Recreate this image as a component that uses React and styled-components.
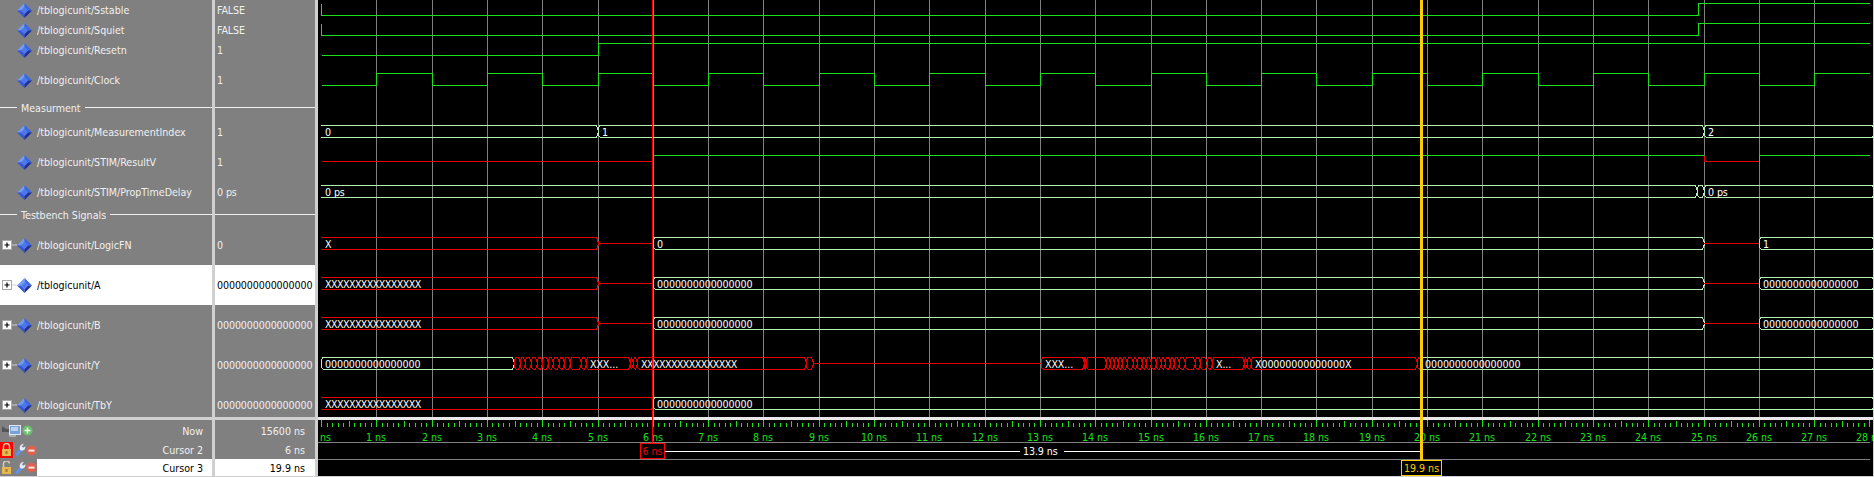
import React from 'react';
import styled, { createGlobalStyle } from 'styled-components';

const FONT = `'DejaVu Sans', 'Liberation Sans', sans-serif`;
const SIZE = '10.6px';

const Global = createGlobalStyle`
    html, body {
        margin: 0;
        padding: 0;
        background: #d0d0d0;
        overflow: hidden;
    }
`;

const Page = styled.div`
    width: 1874px;
    height: 477px;
    display: grid;
    grid-template-columns: 212px 100px 1555px;
    grid-template-rows: 417px 56px;
    column-gap: 3px;
    row-gap: 3px;
    background: #d0d0d0;
    font-family: ${FONT};
    font-stretch: condensed;
    font-size: ${SIZE};
`;

const Column = styled.div`
    grid-column: ${p => p.$col};
    grid-row: ${p => p.$row};
    background: #808080;
    color: #f0f0f0;
    overflow: hidden;
    display: flex;
    flex-direction: column;
`;

const Row = styled.div`
    box-sizing: border-box;
    height: ${p => p.$h}px;
    flex: none;
    display: flex;
    align-items: center;
    white-space: nowrap;
    background: ${p => (p.$selected ? '#fff' : 'transparent')};
    color: ${p => (p.$selected ? '#000' : 'inherit')};
`;

const NameRow = styled(Row)`
    padding-left: 2px;
`;

const ValueRow = styled(Row)`
    padding-left: 2px;
    letter-spacing: -0.1px;
`;

const Expander = styled.span`
    width: 15px;
    height: 11px;
    flex: none;
    display: flex;
    align-items: center;
`;

const NameText = styled.span`
    margin-left: 5px;
`;

const SectionRow = styled(Row)`
    gap: 4px;
    padding-bottom: ${p => p.$after}px;
    &::before {
        content: '';
        width: 17px;
        height: 1px;
        background: #f0f0f0;
    }
    &::after {
        content: '';
        flex: 1;
        height: 1px;
        background: #f0f0f0;
    }
`;

const SectionValue = styled(Row)`
    padding-bottom: ${p => p.$after}px;
    &::after {
        content: '';
        flex: 1;
        height: 1px;
        background: #f0f0f0;
    }
`;

const WavePanel = styled.div`
    grid-column: 3;
    grid-row: 1 / 3;
    background: #000;
    overflow: hidden;
`;

const FootRow = styled.div`
    height: ${p => p.$h}px;
    flex: none;
    display: flex;
    align-items: center;
`;

const FootIcons = styled.div`
    width: 37px;
    height: 100%;
    flex: none;
    display: flex;
    align-items: center;
`;

const FootLabel = styled.div`
    flex: 1;
    height: 100%;
    display: flex;
    align-items: center;
    justify-content: flex-end;
    padding-right: 9px;
    background: ${p => (p.$selected ? '#fff' : 'transparent')};
    color: ${p => (p.$selected ? '#000' : 'inherit')};
`;

const FootValue = styled(FootRow)`
    justify-content: flex-end;
    padding-right: 10px;
    background: ${p => (p.$selected ? '#fff' : 'transparent')};
    color: ${p => (p.$selected ? '#000' : 'inherit')};
`;

const LockBox = styled.span`
    width: 13px;
    height: 16px;
    margin-right: 2px;
    flex: none;
    display: flex;
    align-items: center;
    justify-content: center;
    background: ${p => (p.$active ? '#ff0000' : 'transparent')};
`;

const Diamond = () => (
    <svg width="15" height="15" viewBox="0 0 15 15" style={{ flex: 'none' }}>
        <polygon points="7.5,0 0,7.5 4,7.5 7.5,4" fill="#6f9df7" />
        <polygon points="7.5,0 15,7.5 11,7.5 7.5,4" fill="#3b66e6" />
        <polygon points="0,7.5 7.5,15 7.5,11 4,7.5" fill="#3557d8" />
        <polygon points="15,7.5 7.5,15 7.5,11 11,7.5" fill="#1c2f9e" />
        <polygon points="7.5,4 11,7.5 7.5,11 4,7.5" fill="#4a78f0" />
    </svg>
);

const Plus = () => (
    <svg width="15" height="11" viewBox="0 0 15 11">
        <rect x="0.5" y="0.5" width="9" height="9" fill="#fff" stroke="#a8a8a8" />
        <path d="M2.5 5h5M5 2.5v5" stroke="#000" strokeWidth="1.2" />
        <path d="M10 5h5" stroke="#d0d0d0" />
    </svg>
);

const Lock = ({ open }) => (
    <svg width="11" height="14" viewBox="0 0 11 14">
        <path
            d={open ? 'M2.5 6V3.5a3 3 0 0 1 6 -1' : 'M2.5 6V3.5a3 3 0 0 1 6 0V6'}
            fill="none"
            stroke="#d8d0b0"
            strokeWidth="1.4"
        />
        <rect x="1" y="6" width="9" height="7" fill="#e8b850" />
        <rect x="4.5" y="8" width="2" height="3" fill="#a87820" />
    </svg>
);

const Wrench = () => (
    <svg width="11" height="14" viewBox="0 0 11 14" style={{ flex: 'none' }}>
        <polygon points="0.5,11.5 2.5,13.5 7,7.5 5,5.5" fill="#5b93f5" />
        <path d="M5 6.5C4 3.5 6 1 9 .8L7 3.2 8 4.8 10.5 3.2C10.7 6 8.4 8.2 6 7.5Z" fill="#e8ecf8" />
    </svg>
);

const MinusCircle = () => (
    <svg width="11" height="11" viewBox="0 0 11 11" style={{ flex: 'none' }}>
        <circle cx="5.5" cy="5.5" r="5" fill="#e06050" />
        <rect x="2.5" y="4.6" width="6" height="2" fill="#f8e8e0" />
    </svg>
);

const PlusCircle = () => (
    <svg width="11" height="11" viewBox="0 0 11 11" style={{ flex: 'none' }}>
        <circle cx="5.5" cy="5.5" r="5" fill="#68c068" />
        <path d="M2.5 5.5h6M5.5 2.5v6" stroke="#f0f8f0" strokeWidth="1.6" />
    </svg>
);

const Monitor = () => (
    <svg width="22" height="13" viewBox="0 0 22 13" style={{ flex: 'none' }}>
        <path d="M2 2l4 3h4v3H2z" fill="#555" />
        <rect x="9.5" y="1.5" width="11" height="9" fill="#7aa0d8" stroke="#dfe8f5" />
        <path d="M11 4h7M11 6h7" stroke="#fff" />
        <path d="M9 12h7" stroke="#d8d8d8" />
    </svg>
);

const SIGNALS = [
    { h: 20, name: '/tblogicunit/Sstable', value: 'FALSE' },
    { h: 20, name: '/tblogicunit/Squiet', value: 'FALSE' },
    { h: 20, name: '/tblogicunit/Resetn', value: '1' },
    { h: 40, name: '/tblogicunit/Clock', value: '1' },
    { h: 17, after: 2, section: 'Measurment' },
    { h: 30, name: '/tblogicunit/MeasurementIndex', value: '1' },
    { h: 30, name: '/tblogicunit/STIM/ResultV', value: '1' },
    { h: 30, name: '/tblogicunit/STIM/PropTimeDelay', value: '0 ps' },
    { h: 18, after: 3, section: 'Testbench Signals' },
    { h: 40, name: '/tblogicunit/LogicFN', value: '0', group: true },
    { h: 40, name: '/tblogicunit/A', value: '0000000000000000', group: true, selected: true },
    { h: 40, name: '/tblogicunit/B', value: '0000000000000000', group: true },
    { h: 40, name: '/tblogicunit/Y', value: '0000000000000000', group: true },
    { h: 40, name: '/tblogicunit/TbY', value: '0000000000000000', group: true },
];

const GREEN = '#19e019';
const BUS = '#b4f0b4';
const RED = '#e60000';
const GRID = '#808080';
const RIGHT = 1552;

// wave coordinates are relative to the black panel, which starts at x=318
const OX = 318;
const ns = t => Math.round(321 + 55.3 * t) - OX;
const ZERO = '0000000000000000';
const XES = 'XXXXXXXXXXXXXXXX';

const WaveText = styled.text`
    fill: #fff;
    font-family: ${FONT};
    font-stretch: condensed;
    font-size: ${SIZE};
    letter-spacing: ${p => (p.$tight ? '-0.55px' : '-0.1px')};
`;

const RulerText = styled.text`
    fill: #19e019;
    font-family: ${FONT};
    font-stretch: condensed;
    font-size: ${SIZE};
    text-anchor: middle;
`;

const CursorText = styled.text`
    fill: ${p => p.$color};
    font-family: ${FONT};
    font-stretch: condensed;
    font-size: ${SIZE};
    text-anchor: middle;
`;

const Line = ({ d, color }) => (
    <path d={d} stroke={color} strokeWidth={1} fill="none" shapeRendering="crispEdges" />
);

const Bus = ({ x0, x1, hi, lo, color, label, flat }) => {
    const mid = (hi + lo) / 2;
    const e = 1.5;
    const start = flat ? x0 : x0 + e;
    const open = `M${x0 + e} ${hi}L${x0} ${mid - 2}V${mid + 2}L${x0 + e} ${lo}`;
    const close = `M${x1 - e} ${hi}L${x1} ${mid - 2}V${mid + 2}L${x1 - e} ${lo}`;
    return (
        <g>
            <Line d={`M${start} ${hi}H${x1 - e}M${start} ${lo}H${x1 - e}`} color={color} />
            {!flat && <Line d={open} color={color} />}
            <Line d={close} color={color} />
            {label && (
                <WaveText x={x0 + 4} y={mid + 4} $tight={label === XES}>
                    {label}
                </WaveText>
            )}
        </g>
    );
};

// boundaries of the Y bus, page x
const Y_SEGMENTS = [
    [514, 520], [520, 525], [525, 531], [531, 537], [537, 542], [542, 548], [548, 553], [553, 559],
    [559, 564], [564, 570], [570, 581], [581, 586], [586, 630, 'XXX...'], [630, 633], [633, 637],
    [637, 806, XES], [806, 813],
    [1041, 1084, 'XXX...'], [1084, 1086], [1086, 1106], [1106, 1110], [1110, 1114], [1114, 1118],
    [1118, 1122], [1122, 1127], [1127, 1133], [1133, 1137], [1137, 1142], [1142, 1146], [1146, 1151],
    [1151, 1156], [1156, 1161], [1161, 1165], [1165, 1170], [1170, 1174], [1174, 1179], [1179, 1185],
    [1185, 1195], [1195, 1200], [1200, 1207], [1207, 1212], [1212, 1244, 'X...'], [1244, 1247],
    [1247, 1251], [1251, 1417, 'X00000000000000X'], [1417, 1421],
];

const clockPath = () => {
    const hi = 73.5;
    const lo = 85.5;
    let d = `M4 ${lo}`;
    for (let t = 1; t <= 27; t++) {
        d += `H${ns(t) + 0.5}V${t % 2 ? hi : lo}`;
    }
    return d + `H${RIGHT}`;
};

const Waves = () => {
    const c2 = ns(6) - 1;
    const c3 = 1421 - OX;
    const ticks = [];
    for (let i = 0; i <= 280; i++) {
        const x = Math.round(321 + 5.53 * i) - OX + 0.5;
        const top = i % 10 === 0 ? 420 : i % 5 === 0 ? 421 : 423;
        ticks.push(`M${x} ${top}V427`);
    }
    const grid = [];
    for (let t = 1; t <= 27; t++) grid.push(`M${ns(t) + 0.5} 0V417`);

    return (
        <svg width="1555" height="476" viewBox="0 0 1555 476" style={{ display: 'block' }}>
            <Line d={grid.join('')} color={GRID} />

            <Line d={`M3.5 4V15.5H${1698 - OX}.5V3.5H${RIGHT}`} color={GREEN} />
            <Line d={`M3.5 24V35.5H${1698 - OX}.5V23.5H${RIGHT}`} color={GREEN} />
            <Line d={`M4 55.5H${ns(5)}.5V43.5H${RIGHT}`} color={GREEN} />
            <Line d={clockPath()} color={GREEN} />

            <Bus flat x0={3} x1={ns(5)} hi={125.5} lo={137.5} color={BUS} label="0" />
            <Bus x0={ns(5)} x1={ns(25)} hi={125.5} lo={137.5} color={BUS} label="1" />
            <Bus x0={ns(25)} x1={RIGHT + 4} hi={125.5} lo={137.5} color={BUS} label="2" />

            <Line d={`M4 161.5H${ns(6)}`} color={RED} />
            <Line d={`M${ns(6)} 155.5H${ns(25)}`} color={GREEN} />
            <Line d={`M${ns(25)}.5 155.5V161.5H${ns(26)}`} color={RED} />
            <Line d={`M${ns(26)}.5 161V155.5H${RIGHT}`} color={GREEN} />

            <Bus flat x0={3} x1={1697 - OX} hi={185.5} lo={197.5} color={BUS} label="0 ps" />
            <Bus x0={1697 - OX} x1={ns(25)} hi={185.5} lo={197.5} color={BUS} />
            <Bus x0={ns(25)} x1={RIGHT + 4} hi={185.5} lo={197.5} color={BUS} label="0 ps" />

            {[
                [237.5, 249.5, 'X', '0', '1'],
                [277.5, 289.5, XES, ZERO, ZERO],
                [317.5, 329.5, XES, ZERO, ZERO],
            ].map(([hi, lo, a, b, c]) => (
                <g key={hi}>
                    <Bus flat x0={3} x1={ns(5)} hi={hi} lo={lo} color={RED} label={a} />
                    <Line d={`M${ns(5)} ${hi + 6}H${ns(6)}`} color={RED} />
                    <Bus x0={ns(6)} x1={ns(25)} hi={hi} lo={lo} color={BUS} label={b} />
                    <Line d={`M${ns(25)} ${hi + 6}H${ns(26)}`} color={RED} />
                    <Bus x0={ns(26)} x1={RIGHT + 4} hi={hi} lo={lo} color={BUS} label={c} />
                </g>
            ))}

            <Bus x0={3} x1={514 - OX} hi={357.5} lo={369.5} color={BUS} label={ZERO} />
            {Y_SEGMENTS.map(([a, b, label]) => (
                <Bus key={a} x0={a - OX} x1={b - OX} hi={357.5} lo={369.5} color={RED} label={label} />
            ))}
            <Line d={`M${813 - OX} 363.5H${1041 - OX}`} color={RED} />
            <Bus x0={1421 - OX} x1={RIGHT + 4} hi={357.5} lo={369.5} color={BUS} label={ZERO} />

            <Bus flat x0={3} x1={c2 + 1} hi={397.5} lo={409.5} color={RED} label={XES} />
            <Bus x0={c2 + 1} x1={RIGHT + 4} hi={397.5} lo={409.5} color={BUS} label={ZERO} />

            <rect x="0" y="417" width="1555" height="3" fill="#e8e8e8" />
            <Line d={ticks.join('')} color="#19e019" />
            {Array.from({ length: 29 }, (_, t) => (
                <RulerText key={t} x={ns(t)} y={441}>
                    {t} ns
                </RulerText>
            ))}
            <Line d={`M0 442.5H${RIGHT}M0 459.5H${RIGHT}`} color={GRID} />

            <Line d={`M${c2}.5 0V443`} color="#ff0000" />
            <rect x={640 - OX + 0.5} y="443.5" width="24" height="15" fill="#000" stroke="#ff0000" shapeRendering="crispEdges" />
            <CursorText $color="#e80000" x={652.5 - OX} y={455}>6 ns</CursorText>

            <Line d={`M${665 - OX} 451.5H${c3}`} color="#fff" />
            <rect x={1020 - OX} y="444" width="44" height="14" fill="#000" />
            <WaveText x={1023 - OX} y={455}>13.9 ns</WaveText>

            <rect x={c3 - 1} y="0" width="3" height="460" fill="#ffcc00" />
            <rect x={1401 - OX + 0.5} y="460.5" width="40" height="15" fill="#000" stroke="#ffcc00" shapeRendering="crispEdges" />
            <CursorText $color="#ffcc00" x={1421.5 - OX} y={472}>19.9 ns</CursorText>
        </svg>
    );
};

export default function App() {
    return (
        <Page>
            <Global />
            <Column $col={1} $row={1}>
                {SIGNALS.map((s, i) =>
                    s.section ? (
                        <SectionRow key={i} $h={s.h} $after={s.after}>{s.section}</SectionRow>
                    ) : (
                        <NameRow key={i} $h={s.h} $selected={s.selected}>
                            <Expander>{s.group && <Plus />}</Expander>
                            <Diamond />
                            <NameText>{s.name}</NameText>
                        </NameRow>
                    )
                )}
            </Column>
            <Column $col={2} $row={1}>
                {SIGNALS.map((s, i) =>
                    s.section ? (
                        <SectionValue key={i} $h={s.h} $after={s.after} />
                    ) : (
                        <ValueRow key={i} $h={s.h} $selected={s.selected}>
                            {s.value}
                        </ValueRow>
                    )
                )}
            </Column>
            <WavePanel>
                <Waves />
            </WavePanel>
            <Column $col={1} $row={2}>
                <FootRow $h={21}>
                    <FootIcons>
                        <Monitor />
                        <PlusCircle />
                    </FootIcons>
                    <FootLabel>Now</FootLabel>
                </FootRow>
                <FootRow $h={18}>
                    <FootIcons>
                        <LockBox $active><Lock /></LockBox>
                        <Wrench />
                        <MinusCircle />
                    </FootIcons>
                    <FootLabel>Cursor 2</FootLabel>
                </FootRow>
                <FootRow $h={17}>
                    <FootIcons>
                        <LockBox><Lock open /></LockBox>
                        <Wrench />
                        <MinusCircle />
                    </FootIcons>
                    <FootLabel $selected>Cursor 3</FootLabel>
                </FootRow>
            </Column>
            <Column $col={2} $row={2}>
                <FootValue $h={21}>15600 ns</FootValue>
                <FootValue $h={18}>6 ns</FootValue>
                <FootValue $h={17} $selected>19.9 ns</FootValue>
            </Column>
        </Page>
    );
}
